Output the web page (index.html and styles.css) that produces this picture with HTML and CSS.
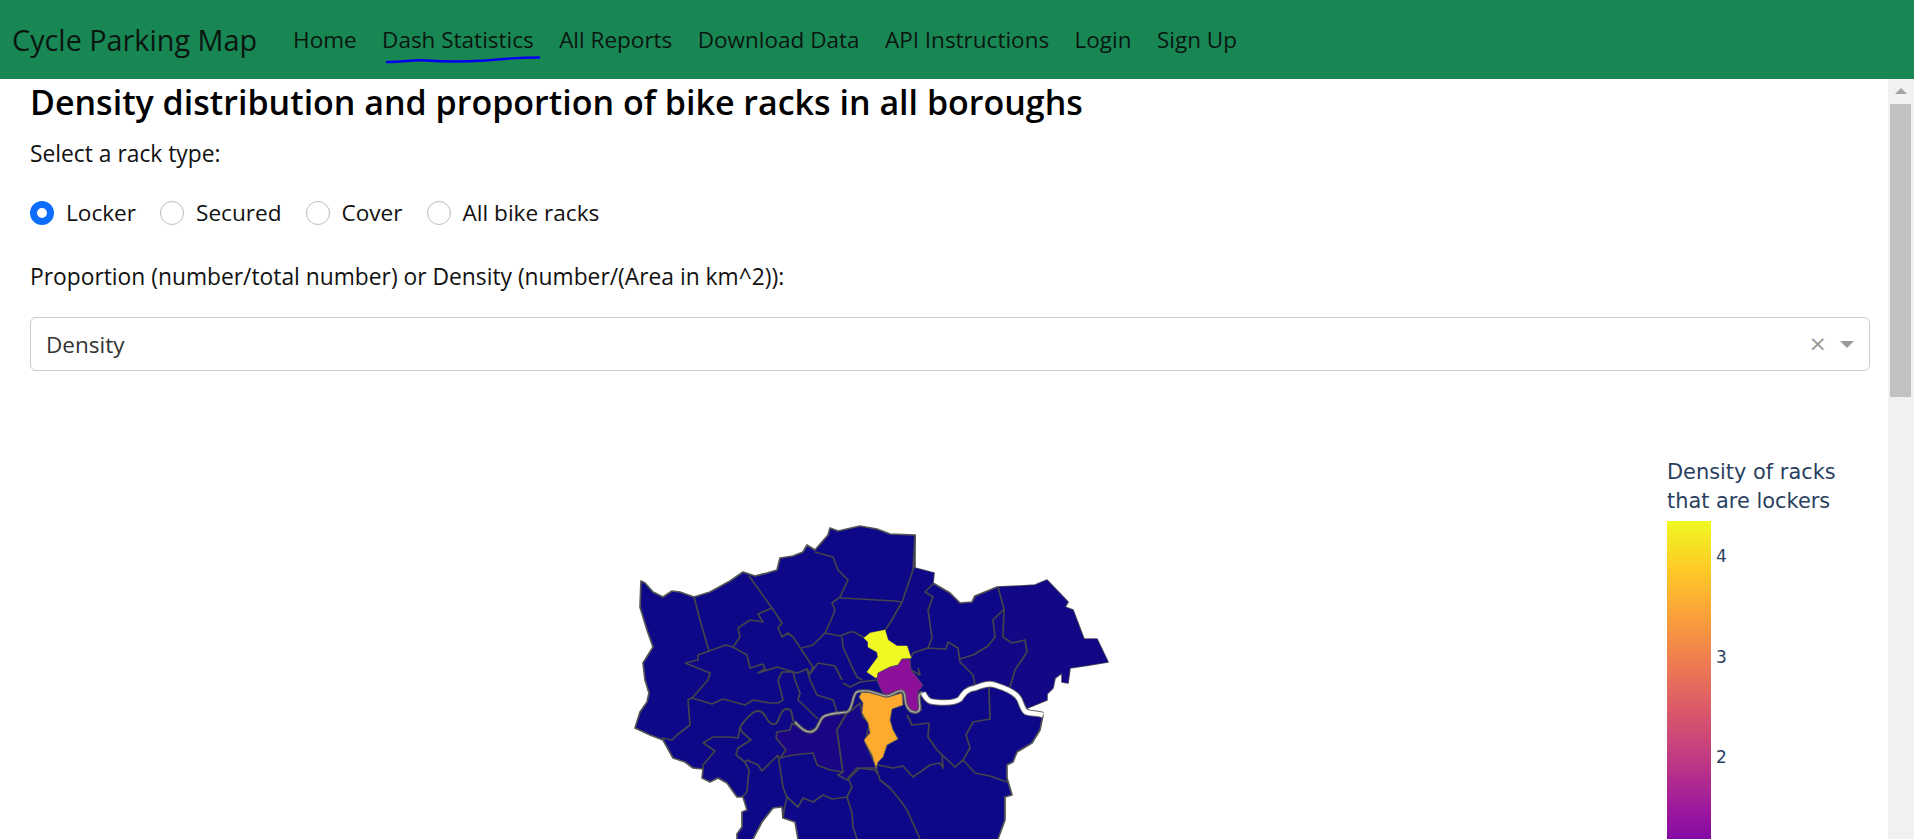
FILE: index.html
```html
<!DOCTYPE html>
<html lang="en">
<head>
<meta charset="utf-8">
<title>Cycle Parking Map</title>
<link rel="stylesheet" href="styles.css">
</head>
<body>
<nav class="navbar">
  <a class="brand" href="#">Cycle Parking Map</a>
  <ul class="nav-links">
    <li><a href="#">Home</a></li>
    <li class="annotated"><a href="#">Dash Statistics</a>
      <svg class="scribble" viewBox="0 0 156 8" width="156" height="8"><path d="M2 7 C20 6.5 32 4.5 42 5.5 C60 7 85 6.5 100 5.5 C120 3.5 140 2.5 154 2.5"/></svg>
    </li>
    <li><a href="#">All Reports</a></li>
    <li><a href="#">Download Data</a></li>
    <li><a href="#">API Instructions</a></li>
    <li><a href="#">Login</a></li>
    <li><a href="#">Sign Up</a></li>
  </ul>
</nav>
<div class="page">
  <main class="content">
    <h2 class="title">Density distribution and proportion of bike racks in all boroughs</h2>
    <p class="field-label first">Select a rack type:</p>
    <div class="radios">
      <label class="radio"><input type="radio" name="rack" checked>Locker</label>
      <label class="radio"><input type="radio" name="rack">Secured</label>
      <label class="radio"><input type="radio" name="rack">Cover</label>
      <label class="radio"><input type="radio" name="rack">All bike racks</label>
    </div>
    <p class="field-label second">Proportion (number/total number) or Density (number/(Area in km^2)):</p>
    <div class="select">
      <span class="select-value">Density</span>
      <span class="select-clear">×</span>
      <span class="select-arrow"></span>
    </div>
    <div class="chart">
      <svg class="map" viewBox="620 510 500 329" width="500" height="329">
        <path class="land" d="M641 581 645 583 653 592 663 597 672 591 680 592 694 597 710 592 730 581 743 572 755 576 767 573 777 570 780 558 793 556 803 552 807 545 815 550 828 535 830 528 838 531 860 526 877 529 890 534 915 535 915 568 934 573 933 583 950 593 960 603 972 602 975 596 997 587 1020 586 1035 585 1047 580 1068 602 1065 607 1073 610 1084 639 1097 639 1108 662 1090 665 1070 668 1068 683 1062 682 1062 673 1055 678 1053 688 1047 694 1047 700 1025 709 1043 715 1040 730 1032 743 1017 752 1013 762 1007 765 1007 778 1012 795 1005 797 1005 820 998 839 998 845 798 845 798 839 795 822 783 818 782 807 773 808 762 822 753 839 753 845 737 845 737 834 742 827 742 812 747 810 743 797 737 797 727 783 718 778 710 782 702 778 703 769 693 768 685 762 673 758 663 740 650 735 635 728 640 712 647 702 649 693 645 680 643 663 653 647 647 630 640 607 Z"/>
        <path class="tint-a" d="M998 587 1020 586 1035 585 1047 580 1068 602 1065 607 1073 610 1084 639 1097 639 1108 662 1090 665 1070 668 1068 683 1062 682 1062 673 1055 678 1053 688 1047 694 1047 700 1025 709 1022 700 1013 692 993 684 1010 687 1015 670 1027 652 1025 640 1012 643 1003 637 1004 609Z"/>
        <path class="tint-a" d="M960 662 973 655 988 646 995 637 993 620 1004 609 1003 637 1012 643 1025 640 1027 652 1015 670 1010 687 993 684 975 686 973 675Z"/>
        <path class="tint-b" d="M777 732 790 730 792 723 807 732 817 728 823 716 847 713 837 730 843 772 830 770 817 765 813 753 793 755 780 758 786 750 776 738Z"/>
        <path class="tint-c" d="M847 713 852 710 860 703 863 717 870 723 865 742 877 768 860 768 847 780 838 775 843 772 837 730Z"/>
        <path class="tint-d" d="M902 602 915 568 934 573 933 583 925 592 933 597 928 610 932 638 928 648 913 653 907 646 897 646 888 640 885 630 890 623Z"/>
        <path class="borders" d="M694 597 700 620 709 651M749 576 772 608 782 623 778 628 782 637 788 633 793 637 813 667 810 674M772 608 758 614 763 622 750 620 738 628 740 637 733 647 747 655 750 668 763 664 765 669 758 673 777 667 797 673 807 669 810 674 818 663 835 666 842 680M685 663 698 660 698 655 709 651 726 645 733 647M685 663 710 673 708 680 693 697 688 700 690 725 677 735 672 740 662 738M815 552 833 557 838 570 848 580 840 597 842 598 895 601 902 602 913 570 915 535M840 597 832 603 835 610 831 620 825 633 813 645 802 648M825 633 840 636 850 632 854 632 865 638M842 637 843 647 852 667 857 677 862 680M692 698 712 704 723 699 745 705 753 700 770 703 778 703 783 700 778 680M778 680 782 672 793 672 795 680 800 693 798 700 818 719M800 672 807 669 810 680 817 695 833 700 837 712M843 683 850 687 860 682 877 680M740 727 742 732 751 740 738 748 736 755 745 762 747 760 758 765 762 771 778 755M703 743 713 737 730 737 738 738 740 727M703 743 715 751 703 765 703 769M745 762 749 770 747 792 742 797M778 755 783 787 787 798 785 805 783 818M787 797 798 807 803 798 813 802 823 795 832 799 847 797 852 787 848 778 857 768 875 770 877 773M847 797 852 813 853 827 857 839M876 768 880 780 890 788 900 800 907 810 920 839M878 765 893 768 903 766 913 777 930 765 940 763 943 768 942 755 937 750 928 737 929 723 912 725 907 715M937 750 955 767 963 760 970 748 966 735 973 722 990 719 989 688M963 760 975 773 990 776 1007 782M934 583 925 592 933 597 928 610 932 638 928 648 913 653 911 658M928 648 946 649 948 642 958 648 960 662 973 675 975 686M960 659 973 655 988 646 995 637 993 620 1004 609 998 587M1004 609 1003 637 1012 643 1025 640 1027 652 1015 670 1010 687M902 602 890 623 885 630M911 670 920 675 918 668"/>
        <path class="yellow" d="M864 638 870 633 885 630 888 640 897 646 907 646 911 658 902 659 898 665 890 667 880 673 876 678 867 672 872 665 878 657 877 652 868 647 868 642Z"/>
        <path class="purple" d="M902 659 910 659 911 670 923 685 918 692 918 703 922 710 913 713 908 708 905 698 902 691 893 692 888 696 882 692 877 680 878 673 890 667 898 665Z"/>
        <path class="orange" d="M859 697 862 692 877 693 888 697 902 693 903 705 892 709 890 720 893 730 898 739 887 745 883 757 878 762 876 768 872 755 864 740 870 733 868 723 862 713 863 703Z"/>
        <path class="river-line" d="M740 727 C745 720 752 711 758 711 C766 711 766 722 772 724 C780 727 778 710 786 709 C795 708 790 720 795 722"/>
        <path class="river-edge" d="M795 722 C800 727 804 732 810 732 C818 732 818 722 823 717 C828 713 840 713 847 712 C852 710 852 700 855 694 C857 690 862 691 868 691 C875 692 880 695 886 696 C892 696 896 690 902 691 C906 692 904 698 906 704 C908 710 912 713 917 712 C922 711 919 702 919 698 C919 694 921 692 923 693"/>
        <path class="river-core" d="M795 722 C800 727 804 732 810 732 C818 732 818 722 823 717 C828 713 840 713 847 712 C852 710 852 700 855 694 C857 690 862 691 868 691 C875 692 880 695 886 696 C892 696 896 690 902 691 C906 692 904 698 906 704 C908 710 912 713 917 712 C922 711 919 702 919 698 C919 694 921 692 923 693"/>
        <path class="thames-edge" d="M923 693 C926 698 928 702 935 702 C945 703 955 703 960 699 C964 693 967 689 975 688 C985 684 990 683 995 685 C1005 688 1012 691 1017 696 C1022 701 1021 708 1026 712 C1031 714 1037 713 1043 715"/>
        <path class="thames" d="M923 693 C926 698 928 702 935 702 C945 703 955 703 960 699 C964 693 967 689 975 688 C985 684 990 683 995 685 C1005 688 1012 691 1017 696 C1022 701 1021 708 1026 712 C1031 714 1037 713 1043 715"/>
      </svg>
      <div class="legend">
        <div class="legend-title">Density of racks<br>that are lockers</div>
        <div class="colorbar">
          <span class="tick tick-4">4</span>
          <span class="tick tick-3">3</span>
          <span class="tick tick-2">2</span>
        </div>
      </div>
    </div>
  </main>
  <aside class="scrollbar">
    <span class="scroll-up"></span>
    <span class="scroll-thumb"></span>
  </aside>
</div>
</body>
</html>
```

FILE: styles.css
```css
* { box-sizing: border-box; }
html, body { margin: 0; height: 100%; overflow: hidden; }
body {
  display: flex;
  flex-direction: column;
  font-family: "Open Sans", "Noto Sans", sans-serif;
  font-size: 22.8px;
  color: #111;
  background: #fff;
}
a { color: inherit; text-decoration: none; }

.navbar {
  flex: none;
  height: 79px;
  display: flex;
  align-items: center;
  padding: 0 0 1px 12px;
  background: #198754;
  color: #0a1610;
}
.brand { font-size: 28.8px; margin-right: 36px; }
.nav-links { display: flex; gap: 25.4px; margin: 0; padding: 0; list-style: none; font-size: 22.5px; }
.annotated { position: relative; }
.scribble { position: absolute; left: 3px; top: 31px; overflow: visible; }
.scribble path { fill: none; stroke: #0000f0; stroke-width: 2.4; stroke-linecap: round; }

.page { flex: 1; min-height: 0; display: flex; }
.content { flex: 1; min-width: 0; display: flex; flex-direction: column; padding: 3px 18px 0 30px; overflow: hidden; }
.title { margin: 0; font-size: 34px; line-height: 40px; font-weight: 600; color: #000; }
.field-label { margin: 0; line-height: 30px; }
.first { margin-top: 17px; }
.second { margin-top: 35px; }

.radios { display: flex; gap: 24px; margin-top: 28px; height: 30px; padding-top: 1px; font-size: 22.6px; }
.radio { display: flex; align-items: center; gap: 12px; line-height: 32px; }
.radio input {
  appearance: none;
  width: 24px;
  height: 24px;
  margin: 0;
  border: 1px solid #bdbdbd;
  border-radius: 50%;
  background: #fff;
}
.radio input:checked { border: 7px solid #0d6efd; }

.select {
  flex: none;
  height: 54px;
  margin-top: 25px;
  display: flex;
  align-items: center;
  padding: 0 15px;
  border: 1px solid #ccc;
  border-radius: 6px;
  color: #333;
  font-size: 22.5px;
}
.select-value { flex: 1; }
.select-clear { color: #999; font-size: 22px; line-height: 1; margin-right: 13px; font-family: "DejaVu Sans", sans-serif; }
.select-arrow { width: 0; height: 0; border: 7px solid transparent; border-top-color: #999; border-bottom-width: 0; }

.chart { position: relative; flex: 1; min-height: 0; }
.map { position: absolute; left: 590px; top: 139px; display: block; }
.land { fill: #0d0887; stroke: #555; stroke-width: 1.7; stroke-linejoin: round; }
.tint-a { fill: #120885; }
.tint-b { fill: #1c0584; stroke: #44444c; stroke-width: 1.7; stroke-linejoin: round; }
.tint-c { fill: #150786; stroke: #44444c; stroke-width: 1.7; stroke-linejoin: round; }
.tint-d { fill: #0f0886; }
.yellow { fill: #f0f921; stroke: #f0f921; stroke-width: .5; }
.purple { fill: #8e0f9a; stroke: #4a4a55; stroke-width: .8; }
.orange { fill: #fdaa2e; stroke: #6a6a50; stroke-width: .8; }
.borders { fill: none; stroke: #44444c; stroke-width: 1.7; stroke-linejoin: round; }
.river-line { fill: none; stroke: #44444c; stroke-width: 2; stroke-linejoin: round; }
.river-edge { fill: none; stroke: #555; stroke-width: 3.4; stroke-linejoin: round; }
.river-core { fill: none; stroke: #b5b5b5; stroke-width: 1.1; stroke-linejoin: round; }
.thames-edge { fill: none; stroke: #666; stroke-width: 6.5; stroke-linejoin: round; }
.thames { fill: none; stroke: #fff; stroke-width: 4.6; stroke-linejoin: round; }

.legend { position: absolute; left: 1637px; top: 87px; font-family: "DejaVu Sans", Verdana, sans-serif; color: #2a3f5f; }
.legend-title { font-size: 20.9px; line-height: 29px; white-space: nowrap; height: 63px; }
.colorbar {
  position: relative;
  width: 44px;
  height: 435px;
  background: linear-gradient(to bottom, #f0f921, #fdca26 11.1%, #fb9f3a 22.2%, #ed7953 33.3%, #d8576b 44.4%, #bd3786 55.6%, #9c179e 66.7%, #7201a8 77.8%, #46039f 88.9%, #0d0887);
}
.tick { position: absolute; left: 49px; font-size: 17px; line-height: 18px; }
.tick-4 { top: 26px; }
.tick-3 { top: 127px; }
.tick-2 { top: 227px; }

.scrollbar { position: relative; flex: none; width: 26px; background: #f1f1f1; }
.scroll-up { position: absolute; left: 7px; top: 9px; width: 0; height: 0; border: 6px solid transparent; border-bottom-color: #a3a3a3; border-top-width: 0; }
.scroll-thumb { position: absolute; left: 2px; top: 25px; width: 21px; height: 293px; background: #c1c1c1; }
```
